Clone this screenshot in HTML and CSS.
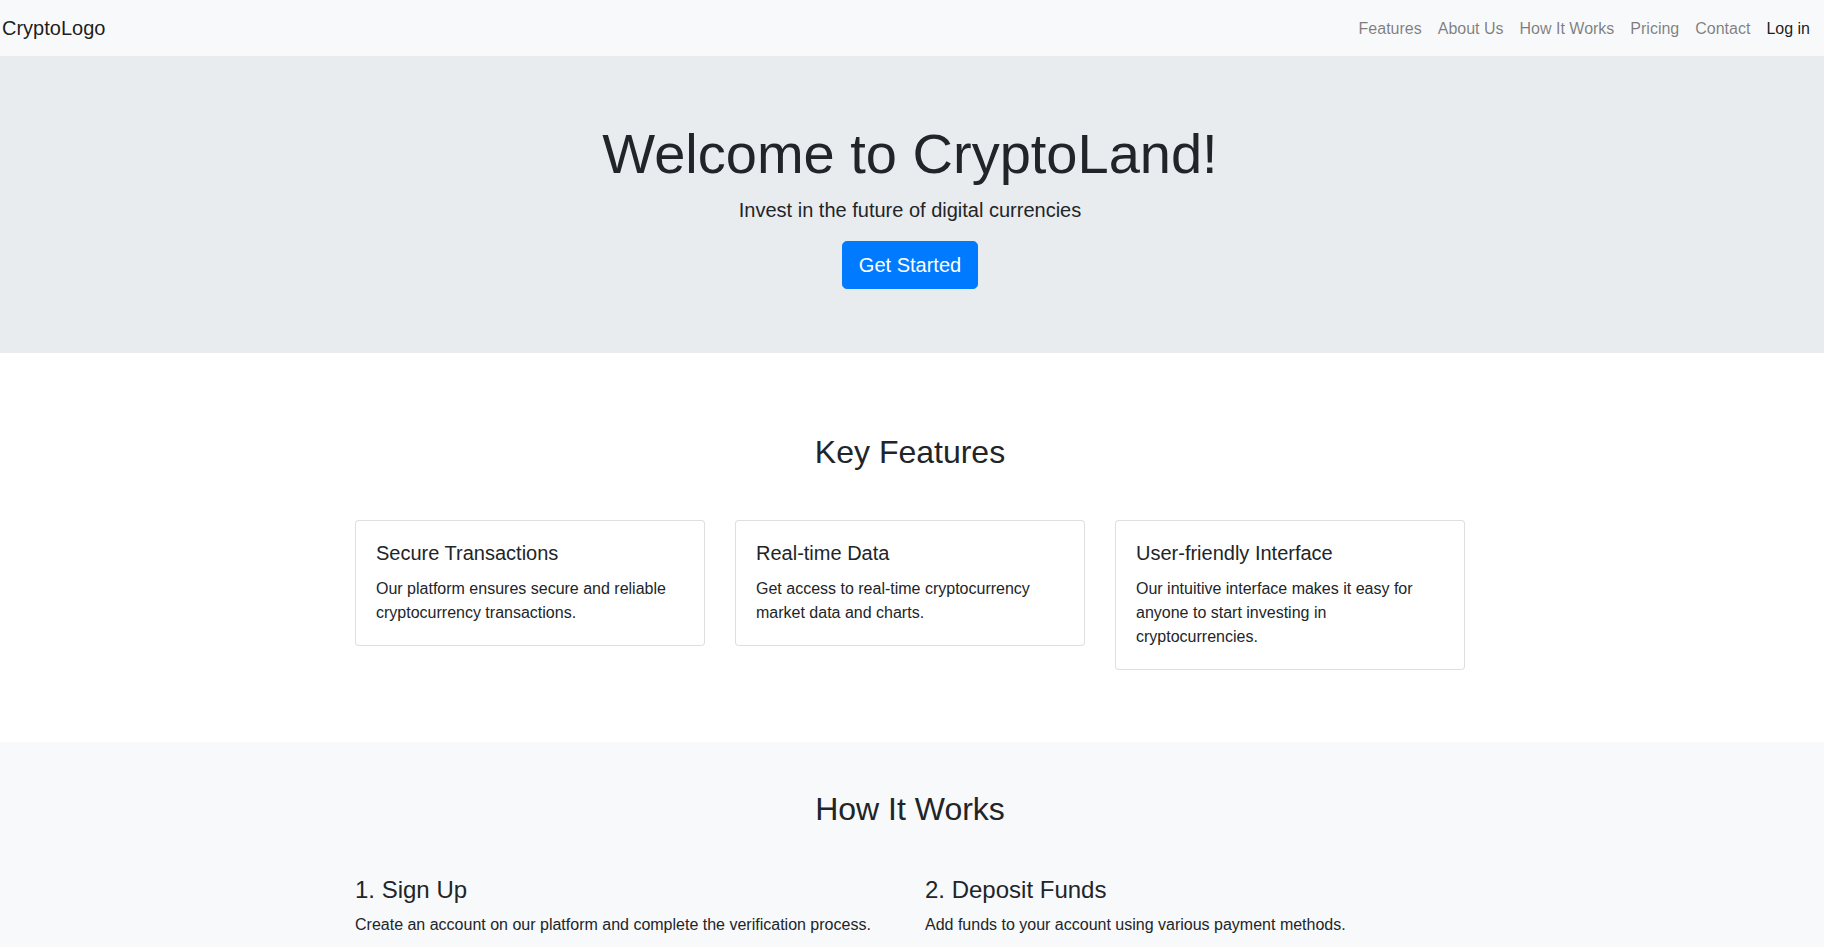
FILE: index.html
```html
<!DOCTYPE html>
<html lang="en">
<head>
<meta charset="utf-8">
<title>CryptoLand</title>
<link rel="stylesheet" href="styles.css">
</head>
<body>
<nav class="navbar">
  <a class="brand" href="#">CryptoLogo</a>
  <ul class="nav-links">
    <li><a class="nav-link" href="#">Features</a></li>
    <li><a class="nav-link" href="#">About Us</a></li>
    <li><a class="nav-link" href="#">How It Works</a></li>
    <li><a class="nav-link" href="#">Pricing</a></li>
    <li><a class="nav-link" href="#">Contact</a></li>
    <li><a class="nav-link active" href="#">Log in</a></li>
  </ul>
</nav>

<header class="hero">
  <h1 class="hero-title">Welcome to CryptoLand!</h1>
  <p class="lead">Invest in the future of digital currencies</p>
  <a class="btn-primary" href="#">Get Started</a>
</header>

<section class="features">
  <div class="container">
    <h2 class="section-title">Key Features</h2>
    <div class="card-row">
      <div class="card">
        <h5 class="card-title">Secure Transactions</h5>
        <p class="card-text">Our platform ensures secure and reliable cryptocurrency transactions.</p>
      </div>
      <div class="card">
        <h5 class="card-title">Real-time Data</h5>
        <p class="card-text">Get access to real-time cryptocurrency market data and charts.</p>
      </div>
      <div class="card">
        <h5 class="card-title">User-friendly Interface</h5>
        <p class="card-text">Our intuitive interface makes it easy for anyone to start investing in cryptocurrencies.</p>
      </div>
    </div>
  </div>
</section>

<section class="how">
  <div class="container">
    <h2 class="section-title">How It Works</h2>
    <div class="step-row">
      <div class="step">
        <h4 class="step-title">1. Sign Up</h4>
        <p class="step-text">Create an account on our platform and complete the verification process.</p>
      </div>
      <div class="step">
        <h4 class="step-title">2. Deposit Funds</h4>
        <p class="step-text">Add funds to your account using various payment methods.</p>
      </div>
      <div class="step">
        <h4 class="step-title">3. Start Investing</h4>
        <p class="step-text">Choose from a wide range of cryptocurrencies and start investing.</p>
      </div>
      <div class="step">
        <h4 class="step-title">4. Track Your Portfolio</h4>
        <p class="step-text">Monitor your investments and track their performance in real time.</p>
      </div>
    </div>
  </div>
</section>
</body>
</html>
```

FILE: styles.css
```css
* { box-sizing: border-box; }

html, body {
  margin: 0;
  padding: 0;
}

body {
  font-family: "Liberation Sans", Arial, Helvetica, sans-serif;
  font-size: 16px;
  line-height: 1.5;
  color: #212529;
  background: #fff;
}

h1, h2, h4, h5, p { margin: 0; }

a { text-decoration: none; }

/* Navbar */
.navbar {
  display: flex;
  align-items: center;
  justify-content: space-between;
  background: #f8f9fa;
  padding: 8px 6px 8px 2px;
  height: 56px;
}

.brand {
  font-size: 20px;
  line-height: 30px;
  padding: 5px 0;
  color: rgba(0, 0, 0, 0.9);
}

.nav-links {
  display: flex;
  list-style: none;
  margin: 0;
  padding: 0;
}

.nav-link {
  display: block;
  padding: 9px 8px 7px;
  line-height: 24px;
  color: rgba(0, 0, 0, 0.5);
}

.nav-link.active { color: rgba(0, 0, 0, 0.9); }

/* Hero */
.hero {
  background: #e9ecef;
  padding: 64px 34px 64px 30px;
  margin-bottom: 32px;
  text-align: center;
}

.hero-title {
  font-size: 56px;
  font-weight: 300;
  line-height: 1.2;
  margin-bottom: 8px;
}

.lead {
  font-size: 20px;
  font-weight: 300;
  line-height: 30px;
  margin-bottom: 16px;
}

.btn-primary {
  display: inline-block;
  vertical-align: top;
  background: #007bff;
  color: #fff;
  font-size: 20px;
  line-height: 30px;
  padding: 8px 16px;
  border: 1px solid #007bff;
  border-radius: 4.8px;
}

/* Sections */
.container {
  max-width: 1140px;
  margin: 0 auto;
  padding: 0 15px;
}

.features {
  padding: 48px 4px 48px 0;
}

.section-title {
  font-size: 32px;
  font-weight: 500;
  line-height: 1.2;
  text-align: center;
  margin-bottom: 48px;
}

.card-row {
  display: grid;
  grid-template-columns: repeat(3, 1fr);
  column-gap: 30px;
  align-items: start;
}

.card {
  border: 1px solid rgba(0, 0, 0, 0.125);
  border-radius: 4px;
  padding: 20px;
  margin-bottom: 24px;
  background: #fff;
}

.card-title {
  font-size: 20px;
  font-weight: 500;
  line-height: 1.2;
  margin-bottom: 12px;
}

.how {
  background: #f8f9fa;
  padding: 48px 4px 48px 0;
}

.step-row {
  display: grid;
  grid-template-columns: repeat(2, 1fr);
  column-gap: 30px;
}

.step { margin-bottom: 24px; }

.step-title {
  font-size: 24px;
  font-weight: 500;
  line-height: 1.2;
  margin-bottom: 8px;
}

.step-text { margin-bottom: 16px; }
```
